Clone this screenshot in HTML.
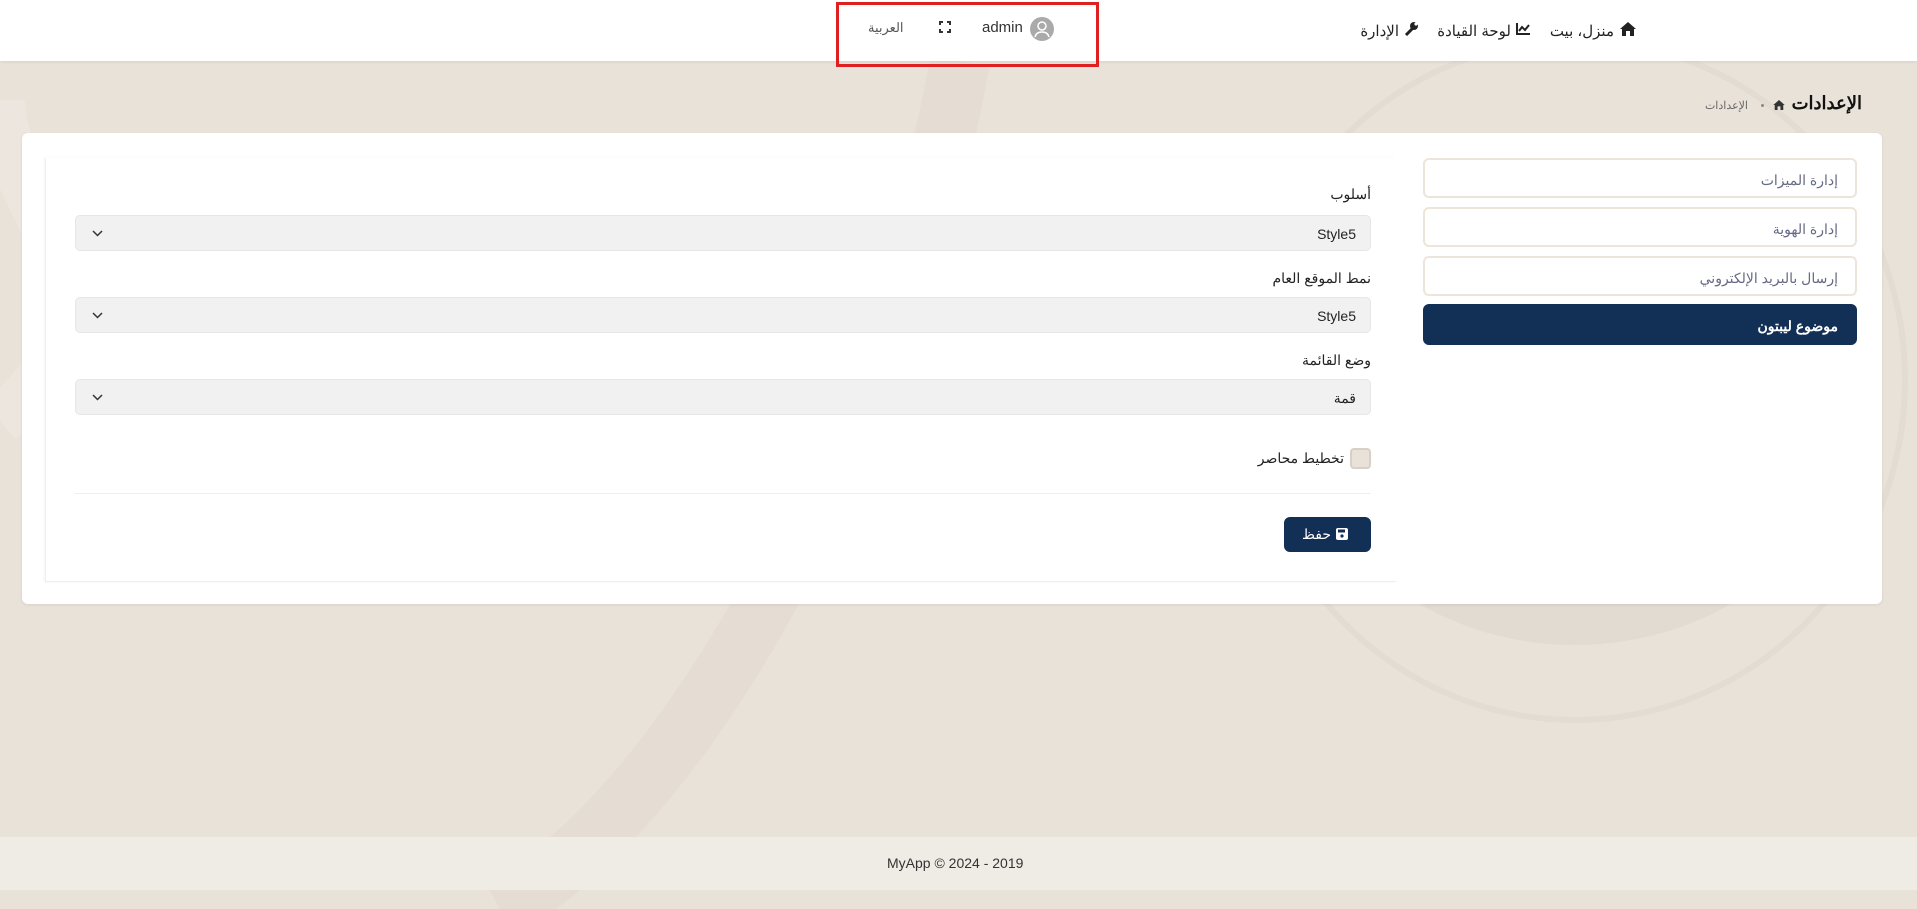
<!DOCTYPE html>
<html><head><meta charset="utf-8"><style>
*{box-sizing:border-box;margin:0;padding:0}
body{width:1917px;height:909px;overflow:hidden;background:#e9e2d9;font-family:"Liberation Sans","Noto Sans CJK SC",sans-serif;position:relative;color:#222}
.a{position:absolute}
.nav{left:0;top:0;width:1917px;height:61px;background:#fff;box-shadow:0 1px 3px rgba(0,0,0,.08)}
.t{position:absolute;white-space:nowrap;direction:rtl}
.menu{position:absolute;left:1423px;width:434px;height:40px;border:2px solid #ece5da;border-radius:6px;background:#fff;font-size:14px;color:#666a85;direction:rtl;padding:12px 17px 0 0}
.sel{position:absolute;left:75px;width:1296px;height:36px;background:#f1f1f1;border:1px solid #e6e6e6;border-radius:5px;font-size:14px;color:#222}
.sel .v{position:absolute;right:14px;top:10px}
.sel svg{position:absolute;left:16px;top:14px}
.lbl{position:absolute;right:546px;font-size:14px;direction:rtl;color:#222}
</style></head><body>
<svg class="a" style="left:0;top:0" width="1917" height="909">
<path d="M960 61 C 900 400, 700 800, 500 909" stroke="#e2dbd1" stroke-width="60" fill="none" opacity=".6"/>
<ellipse cx="1575" cy="420" rx="270" ry="225" fill="#e2dbd2"/>
<ellipse cx="1575" cy="380" rx="330" ry="340" fill="none" stroke="#e3dcd3" stroke-width="6"/>
<path d="M0 420 C 150 300, 0 200, 0 100" stroke="#ece6de" stroke-width="50" fill="none"/>
</svg>
<div class="a nav"></div>
<div class="a" style="left:836px;top:2px;width:263px;height:65px;border:3px solid #e02020"></div>
<div class="t" style="left:868px;top:20px;font-size:13px;color:#555">العربية</div>
<svg class="a" style="left:939px;top:21px" width="12" height="12" viewBox="0 0 12 12" fill="none" stroke="#333" stroke-width="2"><path d="M1 4V1h3M8 1h3v3M11 8v3H8M4 11H1V8"/></svg>
<div class="t" style="left:982px;top:19px;font-size:15px;color:#333;direction:ltr">admin</div>
<svg class="a" style="left:1030px;top:17px" width="24" height="24" viewBox="0 0 24 24"><circle cx="12" cy="12" r="12" fill="#aaa"/><circle cx="12" cy="9" r="4" fill="none" stroke="#fff" stroke-width="1.5"/><path d="M5 20c1-4 4-5 7-5s6 1 7 5" fill="none" stroke="#fff" stroke-width="1.5"/></svg>
<svg class="a" style="left:1620px;top:22px" width="16" height="14" viewBox="0 0 16 14"><path d="M8 0L0 7h2v7h4V9h4v5h4V7h2z" fill="#222"/></svg>
<div class="t" style="right:303px;top:22px;font-size:15px">منزل، بيت</div>
<svg class="a" style="left:1516px;top:23px" width="14" height="12" viewBox="0 0 14 12"><path d="M1 0v11h13" stroke="#222" stroke-width="2" fill="none"/><path d="M3 8l3-4 3 3 4-5" stroke="#222" stroke-width="2" fill="none"/></svg>
<div class="t" style="right:406px;top:22px;font-size:15px">لوحة القيادة</div>
<svg class="a" style="left:1404px;top:21px" width="14" height="15" viewBox="0 0 14 15"><path d="M2 14l7-7" stroke="#222" stroke-width="3"/><circle cx="10" cy="5" r="4" fill="#222"/><circle cx="12" cy="3" r="1.6" fill="#fff"/></svg>
<div class="t" style="right:518px;top:22px;font-size:15px">الإدارة</div>
<div class="t" style="right:55px;top:93px;font-size:18px;font-weight:bold;color:#111">الإعدادات</div>
<svg class="a" style="left:1773px;top:100px" width="12" height="10" viewBox="0 0 16 14"><path d="M8 0L0 7h2v7h4V9h4v5h4V7h2z" fill="#333"/></svg>
<div class="a" style="left:1761px;top:104px;width:3px;height:3px;border-radius:2px;background:#888"></div>
<div class="t" style="right:169px;top:99px;font-size:11px;color:#666">الإعدادات</div>
<div class="a" style="left:22px;top:133px;width:1860px;height:471px;background:#fff;border-radius:6px;box-shadow:0 1px 3px rgba(0,0,0,.08)"></div>
<div class="menu" style="top:158px">إدارة الميزات</div>
<div class="menu" style="top:207px">إدارة الهوية</div>
<div class="menu" style="top:256px">إرسال بالبريد الإلكتروني</div>
<div class="menu" style="top:304px;height:41px;background:#122f56;border-color:#122f56;color:#fff;font-weight:bold;padding-top:12px">موضوع ليبتون</div>
<div class="a" style="left:45px;top:158px;width:1351px;height:424px;border:1px solid #eee;border-right:none;border-top:none;box-shadow:-1px 0 2px rgba(0,0,0,.04)"></div>
<div class="lbl" style="top:186px">أسلوب</div>
<div class="sel" style="top:215px"><span class="v">Style5</span><svg width="11" height="7" viewBox="0 0 11 7"><path d="M1 1l4.5 4.5L10 1" stroke="#333" stroke-width="1.5" fill="none"/></svg></div>
<div class="lbl" style="top:270px">نمط الموقع العام</div>
<div class="sel" style="top:297px"><span class="v">Style5</span><svg width="11" height="7" viewBox="0 0 11 7"><path d="M1 1l4.5 4.5L10 1" stroke="#333" stroke-width="1.5" fill="none"/></svg></div>
<div class="lbl" style="top:352px">وضع القائمة</div>
<div class="sel" style="top:379px"><span class="v">قمة</span><svg width="11" height="7" viewBox="0 0 11 7"><path d="M1 1l4.5 4.5L10 1" stroke="#333" stroke-width="1.5" fill="none"/></svg></div>
<div class="a" style="left:1350px;top:448px;width:21px;height:21px;background:#e9e2d9;border:2px solid #d6d0c8;border-radius:4px"></div>
<div class="t" style="right:573px;top:450px;font-size:14px">تخطيط محاصر</div>
<div class="a" style="left:75px;top:493px;width:1296px;height:1px;background:#eee"></div>
<div class="a" style="left:1284px;top:517px;width:87px;height:35px;background:#122f56;border-radius:6px"></div>
<svg class="a" style="left:1336px;top:528px" width="12" height="12" viewBox="0 0 12 12"><rect width="12" height="12" rx="2" fill="#fff"/><rect x="2" y="1.5" width="7" height="3" fill="#122f56"/><circle cx="6" cy="8" r="1.6" fill="#122f56"/></svg>
<div class="t" style="left:1302px;top:526px;font-size:14px;color:#fff">حفظ</div>
<div class="a" style="left:0;top:837px;width:1917px;height:53px;background:#efebe5"></div>
<div class="t" style="left:887px;top:855px;font-size:14px;color:#333;direction:ltr">MyApp © 2024 - 2019</div>
</body></html>
